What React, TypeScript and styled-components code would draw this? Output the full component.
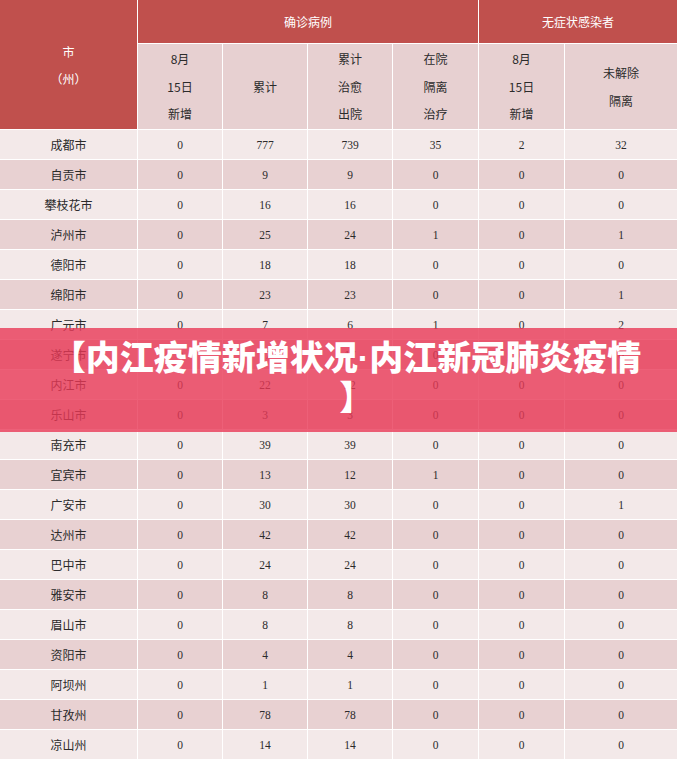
import React from "react";
import styled, { createGlobalStyle } from "styled-components";

const Global = createGlobalStyle`
  html, body { margin: 0; padding: 0; background: #ffffff; }
  body { font-family: "Noto Sans CJK SC", "Noto Sans", sans-serif; }
`;

const Page = styled.div`
  position: relative;
  width: 677px;
  height: 762px;
  overflow: hidden;
  background: #ffffff;
`;

const Grid = styled.div`
  display: grid;
  grid-template-columns: 137px 84px 84px 84px 85px 85px 112px;
  grid-template-rows: 43px 85px repeat(21, 29px);
  column-gap: 1px;
  row-gap: 1px;
  background: #ffffff;
`;

const HeadCell = styled.div<{ $col: string; $row: string }>`
  grid-column: ${(p) => p.$col};
  grid-row: ${(p) => p.$row};
  background: #c0504d;
  color: #ffffff;
  font-size: 12px;
  line-height: 27px;
  display: flex;
  flex-direction: column;
  align-items: center;
  justify-content: center;
  text-align: center;
`;

const SubCell = styled.div`
  grid-row: 2;
  background: #e7d0d1;
  color: #2b2b2b;
  font-size: 12px;
  line-height: 27.5px;
  display: flex;
  flex-direction: column;
  align-items: center;
  justify-content: center;
  text-align: center;
`;

const Cell = styled.div<{ $dark: boolean; $num?: boolean }>`
  background: ${(p) => (p.$dark ? "#e8d1d2" : "#f3e9e9")};
  color: #2b2b2b;
  font-size: ${(p) => (p.$num ? "11.5px" : "12px")};
  font-family: ${(p) =>
    p.$num
      ? '"Liberation Serif", "DejaVu Serif", serif'
      : '"Noto Sans CJK SC", "Noto Sans", sans-serif'};
  display: flex;
  align-items: center;
  justify-content: center;
`;

const Banner = styled.div`
  position: absolute;
  left: 0;
  top: 328px;
  width: 677px;
  height: 104px;
  box-sizing: border-box;
  padding: 10px 0 0 16px;
  background: rgba(233, 56, 86, 0.8);
  color: #ffffff;
  font-family: "Liberation Sans", "Noto Sans CJK SC", sans-serif;
  font-weight: 900;
  font-size: 34px;
  line-height: 40px;
  text-align: center;
  white-space: nowrap;
`;

const BannerTail = styled.span`
  margin-left: 20px;
`;

type Row = [string, number, number, number, number, number, number];

const rows: Row[] = [
  ["成都市", 0, 777, 739, 35, 2, 32],
  ["自贡市", 0, 9, 9, 0, 0, 0],
  ["攀枝花市", 0, 16, 16, 0, 0, 0],
  ["泸州市", 0, 25, 24, 1, 0, 1],
  ["德阳市", 0, 18, 18, 0, 0, 0],
  ["绵阳市", 0, 23, 23, 0, 0, 1],
  ["广元市", 0, 7, 6, 1, 0, 2],
  ["遂宁市", 0, 17, 17, 0, 0, 0],
  ["内江市", 0, 22, 22, 0, 0, 0],
  ["乐山市", 0, 3, 3, 0, 0, 0],
  ["南充市", 0, 39, 39, 0, 0, 0],
  ["宜宾市", 0, 13, 12, 1, 0, 0],
  ["广安市", 0, 30, 30, 0, 0, 1],
  ["达州市", 0, 42, 42, 0, 0, 0],
  ["巴中市", 0, 24, 24, 0, 0, 0],
  ["雅安市", 0, 8, 8, 0, 0, 0],
  ["眉山市", 0, 8, 8, 0, 0, 0],
  ["资阳市", 0, 4, 4, 0, 0, 0],
  ["阿坝州", 0, 1, 1, 0, 0, 0],
  ["甘孜州", 0, 78, 78, 0, 0, 0],
  ["凉山州", 0, 14, 14, 0, 0, 0],
];

const subHeads: string[][] = [
  ["8月", "15日", "新增"],
  ["累计"],
  ["累计", "治愈", "出院"],
  ["在院", "隔离", "治疗"],
  ["8月", "15日", "新增"],
  ["未解除", "隔离"],
];

export default function App() {
  return (
    <Page>
      <Global />
      <Grid>
        <HeadCell $col="1" $row="1 / span 2">
          <span>市</span>
          <span>（州）</span>
        </HeadCell>
        <HeadCell $col="2 / span 4" $row="1">
          确诊病例
        </HeadCell>
        <HeadCell $col="6 / span 2" $row="1">
          无症状感染者
        </HeadCell>
        {subHeads.map((lines, i) => (
          <SubCell key={i}>
            {lines.map((l, j) => (
              <span key={j}>{l}</span>
            ))}
          </SubCell>
        ))}
        {rows.map((r, i) =>
          r.map((v, j) => (
            <Cell key={`${i}-${j}`} $dark={i % 2 === 1} $num={j > 0}>
              {v}
            </Cell>
          ))
        )}
      </Grid>
      <Banner>
        【内江疫情新增状况·内江新冠肺炎疫情
        <br />
        <BannerTail>】</BannerTail>
      </Banner>
    </Page>
  );
}
